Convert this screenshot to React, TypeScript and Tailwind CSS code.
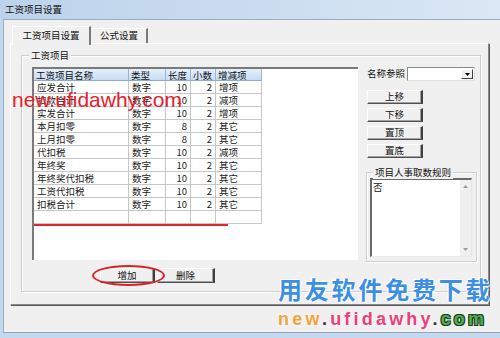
import React from "react";

const rows: string[][] = [
  ["应发合计", "数字", "10", "2", "增项"],
  ["扣款合计", "数字", "10", "2", "减项"],
  ["实发合计", "数字", "10", "2", "增项"],
  ["本月扣零", "数字", "8", "2", "其它"],
  ["上月扣零", "数字", "8", "2", "其它"],
  ["代扣税", "数字", "10", "2", "减项"],
  ["年终奖", "数字", "10", "2", "其它"],
  ["年终奖代扣税", "数字", "10", "2", "其它"],
  ["工资代扣税", "数字", "10", "2", "其它"],
  ["扣税合计", "数字", "10", "2", "其它"],
  ["", "", "", "", ""],
];

const headers = ["工资项目名称", "类型", "长度", "小数", "增减项"];

function Btn({ children, w }: { children: React.ReactNode; w: string }) {
  return (
    <div
      className={
        "flex items-center justify-center bg-[#f0f0f0] border-t border-l border-t-white border-l-white border-b border-b-[#505050] border-r-2 border-r-[#404040] leading-none shadow-[inset_-1px_-1px_0_#a0a0a0] " +
        w
      }
    >
      {children}
    </div>
  );
}

export default function App() {
  return (
    <div className="relative w-[500px] h-[338px] overflow-hidden bg-[#c4d8ee] font-['Noto_Sans_CJK_SC',sans-serif] text-[9.5px] text-[#111]">
      {/* Title bar */}
      <div className="h-[19px] flex items-center pl-[5px] leading-none bg-gradient-to-r from-[#bdd3eb] via-[#cadcf0] to-[#dbe8f5]">
        工资项目设置
      </div>

      {/* Client area */}
      <div className="ml-[3px] h-[314px] bg-[#f0f0f0] border-t border-l border-b border-t-[#98acc4] border-l-[#98acc4] border-b-[#8ea4c0]">
        {/* Tab strip */}
        <div className="h-[23px] flex items-end pl-[8px]">
          <div className="relative z-10 mb-[-2px] w-[79px] h-[19px] flex items-center justify-center bg-[#f0f0f0] border-t border-l border-t-white border-l-white border-r-2 border-r-[#7a7a7a] leading-none">
            工资项目设置
          </div>
          <div className="w-[56px] h-[15px] ml-[1px] flex items-center justify-center border-t border-t-white border-r-2 border-r-[#7a7a7a] leading-none">
            公式设置
          </div>
        </div>

        {/* Tab page */}
        <div className="ml-[6px] w-[479px] h-[262px] border border-t-white border-l-white border-r-[#8a8a8a] border-b-[#8a8a8a] shadow-[1px_1px_0_#5a5a5a]">
          {/* Group box 工资项目 */}
          <div className="relative ml-[10px] mt-[11px] w-[460px] h-[237px] border border-[#cfcfcf] shadow-[inset_1px_1px_0_#fff,1px_1px_0_#fff]">
            <span className="absolute left-[7px] top-[-7px] px-[2px] bg-[#f0f0f0] leading-[13px]">
              工资项目
            </span>

            <div className="flex pl-[10px] pt-[11px]">
              {/* List */}
              <div className="relative w-[326px] h-[193px] bg-white border-l-2 border-t-2 border-l-[#7a7a7a] border-t-[#7a7a7a]">
                <div className="grid grid-cols-[95px_37px_25px_25px_46px] w-[228px]">
                  {headers.map((h) => (
                    <div
                      key={h}
                      className="h-[12px] leading-[12px] px-[2px] whitespace-nowrap bg-gradient-to-b from-[#e6f0fb] to-[#c8dcf2] border-r border-b border-r-[#9ab6d6] border-b-[#8eabcf]"
                    >
                      {h}
                    </div>
                  ))}
                  {rows.map((r, i) =>
                    r.map((c, j) => (
                      <div
                        key={i + "-" + j}
                        className={
                          "h-[13px] leading-[12px] px-[3px] whitespace-nowrap overflow-hidden border-r border-b border-[#c6c6c6] text-[#222] " +
                          (j === 2 || j === 3 ? "text-right" : "text-left")
                        }
                      >
                        {c}
                      </div>
                    ))
                  )}
                </div>
                <div className="absolute left-0 top-[155px] w-[194px] h-[2px] bg-[#e2262d]" />
              </div>

              {/* Right panel */}
              <div className="ml-[8px] w-[111px] flex flex-col">
                <div className="h-[14px] flex items-center justify-between pl-[1px] pr-[2px]">
                  <span className="leading-none">名称参照</span>
                  <div className="w-[68px] h-[14px] bg-white border border-t-[#8a8a8a] border-l-[#8a8a8a] border-r-[#e0e0e0] border-b-[#e0e0e0] flex justify-end p-[1px]">
                    <div className="w-[12px] h-full bg-[#f0f0f0] border-t border-l border-t-white border-l-white border-r border-b border-r-[#404040] border-b-[#404040] flex items-center justify-center">
                      <svg width="5" height="3" viewBox="0 0 5 3">
                        <polygon points="0,0 5,0 2.5,3" fill="#000" />
                      </svg>
                    </div>
                  </div>
                </div>
                <div className="mt-[9px] flex flex-col gap-[4px] pl-[1px]">
                  <Btn w="w-[56px] h-[14px]">上移</Btn>
                  <Btn w="w-[56px] h-[14px]">下移</Btn>
                  <Btn w="w-[56px] h-[14px]">置顶</Btn>
                  <Btn w="w-[56px] h-[14px]">置底</Btn>
                </div>
                <div className="relative mt-[14px] h-[90px] border border-[#cfcfcf] shadow-[inset_1px_1px_0_#fff,1px_1px_0_#fff]">
                  <span className="absolute left-[6px] top-[-7px] px-[2px] bg-[#f0f0f0] leading-[13px] whitespace-nowrap">
                    项目人事取数规则
                  </span>
                  <div className="ml-[3px] mt-[5px] w-[102px] h-[79px] bg-white border-t-2 border-l-2 border-t-[#6a6a6a] border-l-[#6a6a6a] border-r border-b border-r-[#e8e8e8] border-b-[#e8e8e8] flex">
                    <div className="flex-1 pl-[1px] pt-[1px] leading-[12px]">否</div>
                    <div className="w-[11px] h-full bg-[#efefef] flex flex-col justify-between items-center py-[5px]">
                      <svg width="5" height="3" viewBox="0 0 5 3">
                        <polygon points="2.5,0 5,3 0,3" fill="#9a9a9a" />
                      </svg>
                      <svg width="5" height="3" viewBox="0 0 5 3">
                        <polygon points="0,0 5,0 2.5,3" fill="#9a9a9a" />
                      </svg>
                    </div>
                  </div>
                </div>
              </div>
            </div>

            {/* Bottom buttons */}
            <div className="flex pl-[78px] mt-[6px] gap-[2px]">
              <Btn w="w-[55px] h-[15px]">增加</Btn>
              <Btn w="w-[58px] h-[15px]">删除</Btn>
            </div>
          </div>
        </div>
      </div>

      {/* Red ellipse annotation */}
      <div className="absolute left-[92px] top-[265px] w-[73px] h-[21px] border-2 border-[#d8232b] rounded-[50%]" />

      {/* Red watermark */}
      <div className="absolute left-[12px] top-[89px] text-[21px] leading-[21px] text-[#e8202a] font-['Liberation_Sans',sans-serif] whitespace-nowrap">
        new.ufidawhy.com
      </div>

      {/* Bottom-right watermark */}
      <div className="absolute left-[278px] top-[277px] text-[24px] leading-[24px] font-bold tracking-[2.8px] text-[#3d8fe4] whitespace-nowrap [text-shadow:0_0_2px_#fff,1px_1px_1px_#fff,-1px_-1px_1px_#fff]">
        用友软件免费下载
      </div>
      <div className="absolute left-[278px] top-[310px] text-[18px] leading-[18px] font-bold tracking-[3.2px] whitespace-nowrap font-['Liberation_Sans',sans-serif] [text-shadow:0_0_2px_#fff]">
        <span className="text-[#f4a43a]">new</span>
        <span className="text-[#333]">.</span>
        <span className="text-[#ec3d7c]">ufidawhy</span>
        <span className="text-[#333]">.</span>
        <span className="text-[#4fae4f] [text-shadow:1px_1px_0_#1d3b1d,-1px_-1px_0_#1d3b1d,1px_-1px_0_#1d3b1d,-1px_1px_0_#1d3b1d]">com</span>
      </div>
    </div>
  );
}
